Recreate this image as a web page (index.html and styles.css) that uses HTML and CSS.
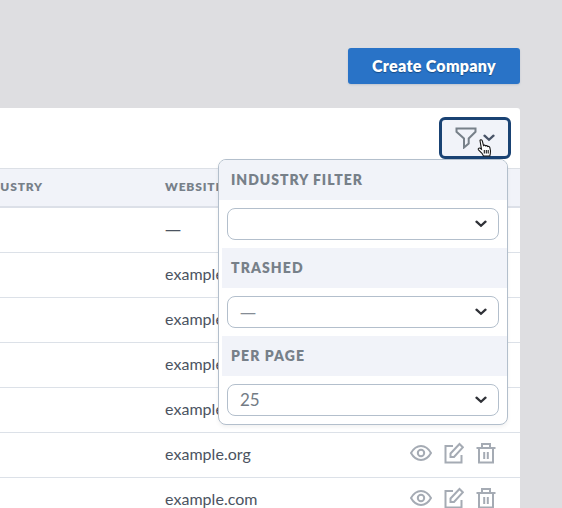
FILE: index.html
```html
<!DOCTYPE html>
<html lang="en">
<head>
<meta charset="utf-8">
<title>Companies</title>
<link rel="stylesheet" href="styles.css">
</head>
<body>
<svg class="symbols" aria-hidden="true">
  <symbol id="chevron" viewBox="0 0 12 8"><path d="M1.500 1.700 6 5.800l4.500-4.100"/></symbol>
  <symbol id="eye" viewBox="0 0 22 18"><path d="M1 9Q5 2 11 2t10 7q-4 7-10 7T1 9Z"/><circle cx="11" cy="9" r="3.200"/></symbol>
  <symbol id="edit" viewBox="0 0 20 22"><path d="M9 4H1.500v16.500h16V13"/><path d="M6.500 11.500 15.500 2l3.300 3.300L10 15H6.500Z"/></symbol>
  <symbol id="trash" viewBox="0 0 20 22"><path d="M.5 6h19M6 6V2h8v4M3 6v14.500h14V6M8.200 10v7M11.800 10v7"/></symbol>
</svg>
<main class="page">
  <header class="actions"><button class="create">Create Company</button></header>
  <section class="card">
    <div class="toolbar">
      <button class="filter" aria-label="Filters">
        <svg class="funnel" viewBox="0 0 22 22"><path d="M1.500 1.500h19v3.300l-6.800 6.700v5L9 20.500v-9L1.500 4.800Z"/></svg>
        <svg class="chevron"><use href="#chevron"/></svg>
      </button>
      <svg class="pointer" viewBox="0 0 16 18"><path d="M3 1.500C3.300.4 5 .6 5.300 1.800L6.500 6.500c.5-.7 1.700-.5 2 .4.700-.6 1.800-.3 2.100.6.900-.4 1.900 0 2.200 1 .7 2.400 1.300 4.200.5 6.200L12.800 17H6.500L5 14.300 1.500 10.800C.6 9.700 2 8.600 3.200 9.300l1.300 1Z"/><path d="M7.300 11v3.500M9.300 11v3.500M11.200 11v3.500"/></svg>
      <div class="menu">
        <h3 class="menu-title wide">INDUSTRY FILTER</h3>
        <div class="field"><div class="select"><span></span><svg class="chevron"><use href="#chevron"/></svg></div></div>
        <h3 class="menu-title inset">TRASHED</h3>
        <div class="field"><div class="select"><span class="dash">—</span><svg class="chevron"><use href="#chevron"/></svg></div></div>
        <h3 class="menu-title inset">PER PAGE</h3>
        <div class="field"><div class="select"><span class="count">25</span><svg class="chevron"><use href="#chevron"/></svg></div></div>
      </div>
    </div>
    <div class="row head"><div class="industry"><span>USTRY</span></div><div>WEBSITE</div></div>
    <div class="row"><div></div><div class="dash">—</div></div>
    <div class="row"><div></div><div>example.net</div></div>
    <div class="row"><div></div><div>example.com</div></div>
    <div class="row"><div></div><div>example.org</div></div>
    <div class="row"><div></div><div>example.net</div></div>
    <div class="row"><div></div><div>example.org</div><div class="icons"><svg class="eye"><use href="#eye"/></svg><svg class="edit"><use href="#edit"/></svg><svg class="trash"><use href="#trash"/></svg></div></div>
    <div class="row"><div></div><div>example.com</div><div class="icons"><svg class="eye"><use href="#eye"/></svg><svg class="edit"><use href="#edit"/></svg><svg class="trash"><use href="#trash"/></svg></div></div>
  </section>
</main>
</body>
</html>
```
FILE: styles.css
```css
* { box-sizing: border-box; }
body { margin: 0; background: #dedee1; font-family: Lato, sans-serif; }
svg { fill: none; stroke: currentColor; display: block; flex: none; }
.symbols { width: 0; height: 0; position: absolute; }
.page { width: 562px; height: 508px; padding-right: 42px; overflow: hidden; }
.actions { height: 108px; padding-top: 48px; display: flex; justify-content: flex-end; align-items: flex-start; }
button { font: inherit; margin: 0; padding: 0; }
.create { width: 172px; height: 36px; padding-bottom: 2px; border: 0; border-radius: 3px; background: #2973c7; color: #fff; font-size: 16px; font-weight: 800; letter-spacing: .29px; text-shadow: 0 1px 1px #174b85; box-shadow: 0 1px 2px #bfc5cf; }
.card { height: 450px; background: #fff; border-top-right-radius: 3px; }
.toolbar { position: relative; height: 60px; padding: 9px 9px 0 0; display: flex; justify-content: flex-end; }
.filter { width: 72px; height: 42px; border: 3px solid #194273; border-radius: 6px; background: #f1f3f9; color: #778089; display: flex; align-items: center; padding-left: 13px; gap: 6px; }
.funnel { width: 22px; height: 22px; stroke-width: 2; }
.chevron { width: 12px; height: 8px; color: #303238; stroke-width: 2.3; stroke-linecap: round; }
.filter .chevron { color: #485367; }
.pointer { position: absolute; z-index: 3; top: 31px; left: 477px; width: 16px; height: 18px; fill: #fff; stroke: #161616; stroke-width: 1.1; }
.menu { position: absolute; z-index: 2; top: 51px; left: 218px; width: 290px; height: 266px; background: #fff; border: 1px solid #b3bfcc; border-radius: 8px; overflow: hidden; box-shadow: 0 2px 4px #0000000f; }
.menu-title { height: 40px; margin: 0; padding-left: 12px; line-height: 39px; background: #f1f3f9; color: #778089; font-size: 14px; font-weight: 800; letter-spacing: 1.1px; }
.menu-title.wide { letter-spacing: .96px; }
.menu-title.inset { margin-left: 3px; padding-left: 9px; }
.field { height: 48px; padding: 8px; }
.select { height: 32px; border: 1px solid #b3bfcc; border-radius: 8px; padding: 0 11px 0 12px; display: flex; align-items: center; justify-content: space-between; color: #858c95; font-size: 16px; }
.count { font-size: 17px; padding-bottom: 1px; color: #737b85; }
.dash { font-family: "Open Sans", sans-serif; letter-spacing: 0; }
.row { height: 45px; padding-bottom: 3px; border-bottom: 1px solid #dce1e8; display: grid; grid-template-columns: 165px 1fr 110px; align-items: center; color: #4b5361; font-size: 16px; letter-spacing: .04px; }
.head { height: 40px; padding-bottom: 2px; border-top: 1px solid #dce0e6; border-bottom: 2px solid #dce0e8; background: #f1f3f9; color: #778089; font-size: 12px; font-weight: 800; letter-spacing: .85px; }
.industry { width: 43px; display: flex; justify-content: flex-end; }
.icons { display: flex; align-items: center; gap: 12px; padding-bottom: 2px; color: #a5abb4; stroke-width: 2; }
.eye { width: 22px; height: 18px; }
.edit { width: 20px; height: 22px; }
.trash { width: 20px; height: 22px; }
```
